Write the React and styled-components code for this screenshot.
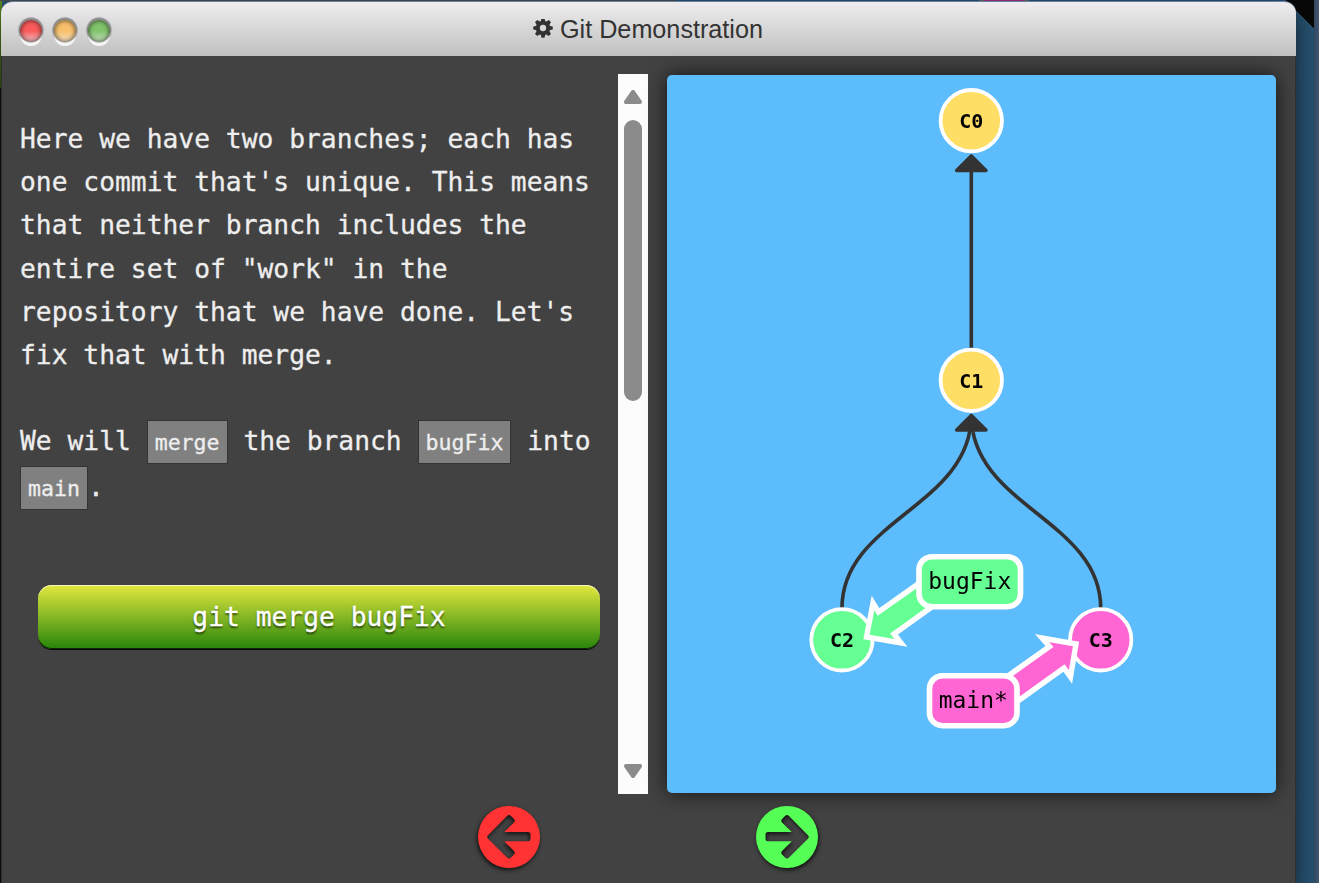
import React from "react";
import styled, { createGlobalStyle, css } from "styled-components";

const mono = `"DejaVu Sans Mono", "Liberation Mono", monospace`;

const Global = createGlobalStyle`
  *, *::before, *::after { box-sizing: border-box; }
  html, body, #root { margin: 0; height: 100%; overflow: hidden; }
`;

const Desktop = styled.div`
  width: 1319px;
  height: 883px;
  padding: 1px 0 0 1px;
  overflow: hidden;
  background:
    linear-gradient(90deg, #344862, #455873) 1314px 0 / 5px 100% no-repeat,
    linear-gradient(225deg, #080808 25.5px, transparent 26px) 1278px -8px / 36px 36px no-repeat,
    linear-gradient(#a0307f, #a0307f) 984px 0 / 40px 1px no-repeat,
    linear-gradient(#666, #666) 979px 0 / 50px 1px no-repeat,
    linear-gradient(#4d4d4d, #4d4d4d) 0 0 / 675px 1px no-repeat,
    linear-gradient(#5d8a20, #38600f) 0 0 / 2px 88px no-repeat,
    linear-gradient(#111, #111) 0 88px / 2px 100% no-repeat,
    #285270;
`;

const Window = styled.main`
  width: 1295px;
  height: 884px;
  display: flex;
  flex-direction: column;
  background: #424242;
  border: 1px solid #303030;
  border-top: 0;
  border-bottom: 0;
  border-radius: 12px 12px 0 0;
  box-shadow: 0 8px 22px rgba(0, 0, 0, 0.6);
`;

const TitleBar = styled.header`
  height: 55px;
  flex: none;
  margin: 0 -1px;
  display: grid;
  grid-template-columns: 1fr auto 1fr;
  align-items: center;
  padding: 0 20px 0 19px;
  border-top: 1px solid #6580a0;
  border-radius: 12px 12px 0 0;
  background: linear-gradient(#efedef, #c0c0c0);
`;

const Lights = styled.div`
  display: flex;
  gap: 12px;
  padding-top: 3px;
`;

const Light = styled.span`
  width: 22px;
  height: 22px;
  border-radius: 50%;
  background: linear-gradient(${(p) => p.$tone} 50%, ${(p) => p.$glow});
  box-shadow:
    inset 0 0 5px rgba(0, 0, 0, 0.75),
    0 -1px 1px 1.5px rgba(90, 90, 90, 0.65),
    0 4px 0 rgba(255, 255, 255, 0.85);
`;

const Title = styled.h1`
  margin: 0;
  display: flex;
  align-items: center;
  gap: 7px;
  font: 400 25.2px/54px "Liberation Sans", Arial, sans-serif;
  color: #333;
`;

const Content = styled.div`
  display: flex;
  height: 738px;
  padding-top: 18px;
`;

const Lesson = styled.section`
  width: 616px;
  padding: 44px 18px 0;
  color: #eee;
  font: 26.31px/43.2px ${mono};
  -webkit-text-stroke: 0.3px;
  white-space: nowrap;
`;

const Paragraph = styled.p`
  margin: 0 0 43px;
`;

const MergeParagraph = styled(Paragraph)`
  height: 90px;
  margin: 0;
`;

const Code = styled.code`
  display: inline-block;
  height: 44px;
  padding: 0 7px;
  border: 1px solid #333;
  background: #808080;
  font: 21.55px/43px ${mono};
  margin-top: ${(p) => (p.$lower ? "2px" : "0")};
`;

const CommandButton = styled.button`
  display: block;
  width: 562px;
  height: 64px;
  margin: 75px 0 0 18px;
  padding: 0;
  border: 0;
  border-radius: 14px;
  background: linear-gradient(#e2e83e, #27850b);
  box-shadow: inset 0 1px 0 #f5f5bd, inset 0 -1px 0 #0d2505, 0 1px 0 #080808;
  color: #fff;
  font: 26.31px/64px ${mono};
  -webkit-text-stroke: 0.3px;
  text-shadow: 0 2px 2px rgba(0, 0, 0, 0.6);
`;

const ScrollTrack = styled.div`
  width: 30px;
  height: 720px;
  display: flex;
  flex-direction: column;
  align-items: center;
  padding: 16px 0;
  background: #fcfcfc;
`;

const ScrollThumb = styled.div`
  width: 18px;
  height: 281px;
  margin: 16px 0 auto;
  border-radius: 9px;
  background: #8b8b8b;
`;

const ScrollArrow = styled.svg`
  width: 18px;
  height: 14px;
  flex: none;
  fill: #8b8b8b;
  stroke: #8b8b8b;
  stroke-width: 4;
  stroke-linejoin: round;
  ${(p) => p.$down && css`transform: rotate(180deg);`}
`;

const GraphPanel = styled.section`
  width: 609px;
  height: 718px;
  margin: 1px 0 0 19px;
  border-radius: 5px;
  background: #5cbcfc;
  filter: drop-shadow(0 0 10px rgba(0, 0, 0, 0.7));
  svg { display: block; }
`;

const Controls = styled.nav`
  display: flex;
  justify-content: center;
  gap: 216px;
  padding: 12px 1px 0 0;
`;

const NavButton = styled.button`
  width: 62px;
  height: 62px;
  padding: 0;
  border: 0;
  background: none;
  svg {
    display: block;
    overflow: visible;
    fill: ${(p) => p.$color};
    filter: drop-shadow(${(p) => p.$shift}px 2px 2px rgba(0, 0, 0, 0.75));
  }
`;

const Gear = () => (
  <svg width="20" height="20" viewBox="-10 -9 20 20">
    <circle r="5.2" fill="none" stroke="#333" strokeWidth="4.1" />
    {[0, 45, 90, 135, 180, 225, 270, 315].map((a) => (
      <path key={a} d="M-2.3-6.2-1.6-9.6Q0-10 1.6-9.6L2.3-6.2Z" fill="#333" transform={`rotate(${a})`} />
    ))}
  </svg>
);

const leftArrow =
  "M31 0A31 31 0 1 1 31 62A31 31 0 1 1 31 0ZM9.8 29.4Q8.5 31 9.8 32.6L29 51.5Q31 53.4 33 51.5L36 48.5Q37.6 46.8 36 45L26.2 35.3H50Q52.5 35.3 52.5 32.8V28.6Q52.5 26.1 50 26.1H26.2L36 16.4Q37.6 14.7 36 13L33 10Q31 8.2 29 10Z";

const CircleArrow = ({ flip }) => (
  <svg width="62" height="62" viewBox="0 0 62 62">
    <path fillRule="evenodd" d={leftArrow} transform={flip ? "matrix(-1 0 0 1 62 0)" : undefined} />
  </svg>
);

const yellow = "#ffde66";
const green = "#66ff94";
const pink = "#ff66d4";

const commits = [
  { id: "C0", x: 304.3, y: 45.7, color: yellow },
  { id: "C1", x: 304.3, y: 305.3, color: yellow },
  { id: "C2", x: 175, y: 564.8, color: green },
  { id: "C3", x: 433.7, y: 564.8, color: pink },
];

const Commit = ({ id, x, y, color }) => (
  <g>
    <circle cx={x} cy={y} r="30.7" fill={color} stroke="#fff" strokeWidth="3.8" />
    <text x={x} y={y + 7.5} textAnchor="middle" fontFamily={mono} fontWeight="700" fontSize="20">{id}</text>
  </g>
);

const BranchLabel = ({ name, x, y, width, color, pointer }) => (
  <g>
    <path d={pointer} fill={color} stroke="#fff" strokeWidth="5.4" strokeMiterlimit="10" />
    <rect x={x} y={y} width={width} height="50" rx="13" fill={color} stroke="#fff" strokeWidth="5.6" />
    <text x={x + width / 2} y={y + 32.5} textAnchor="middle" fontFamily={mono} fontSize="23">{name}</text>
  </g>
);

const CommitGraph = () => (
  <svg width="609" height="718" viewBox="0 0 609 718">
    <g fill="none" stroke="#333" strokeWidth="3.6">
      <path d="M304.3 273V92" />
      <path d="M175 533C175 445 304.3 431 304.3 340" />
      <path d="M433.7 533C433.7 445 304.3 431 304.3 340" />
    </g>
    <g fill="#333" stroke="#333" strokeWidth="3.6" strokeLinejoin="round">
      <path d="M304.3 81 289.7 95.5H318.9Z" />
      <path d="M304.3 340.5 289.7 355H318.9Z" />
    </g>
    {commits.map((c) => <Commit key={c.id} {...c} />)}
    <BranchLabel name="bugFix" x={252} y={481.7} width={101.5} color={green}
      pointer="M251 509 211.5 537 206 528 199.5 562 234 568 227 559 266 531Z" />
    <BranchLabel name="main*" x={262.5} y={600.7} width={87.5} color={pink}
      pointer="M341 601 382.5 571.5 375 563 409 569 403.5 602 397 593 351 626Z" />
  </svg>
);

export default function App() {
  return (
    <Desktop>
      <Global />
      <Window>
        <TitleBar>
          <Lights>
            <Light $tone="#fa5b5b" $glow="#f3c5c5" />
            <Light $tone="#f8c06c" $glow="#f5e3c7" />
            <Light $tone="#82c36d" $glow="#cae4c3" />
          </Lights>
          <Title><Gear /><span>Git Demonstration</span></Title>
        </TitleBar>
        <Content>
          <Lesson>
            <Paragraph>
              Here we have two branches; each has<br />
              one commit that's unique. This means<br />
              that neither branch includes the<br />
              entire set of "work" in the<br />
              repository that we have done. Let's<br />
              fix that with merge.
            </Paragraph>
            <MergeParagraph>
              We will <Code>merge</Code> the branch <Code>bugFix</Code> into<br />
              <Code $lower>main</Code>.
            </MergeParagraph>
            <CommandButton>git merge bugFix</CommandButton>
          </Lesson>
          <ScrollTrack>
            <ScrollArrow viewBox="0 0 18 14"><path d="M9 2 2 12H16Z" /></ScrollArrow>
            <ScrollThumb />
            <ScrollArrow $down viewBox="0 0 18 14"><path d="M9 2 2 12H16Z" /></ScrollArrow>
          </ScrollTrack>
          <GraphPanel><CommitGraph /></GraphPanel>
        </Content>
        <Controls>
          <NavButton $color="#ff3333" $shift={-1} aria-label="Back"><CircleArrow /></NavButton>
          <NavButton $color="#55ff55" $shift={1} aria-label="Forward"><CircleArrow flip /></NavButton>
        </Controls>
      </Window>
    </Desktop>
  );
}
